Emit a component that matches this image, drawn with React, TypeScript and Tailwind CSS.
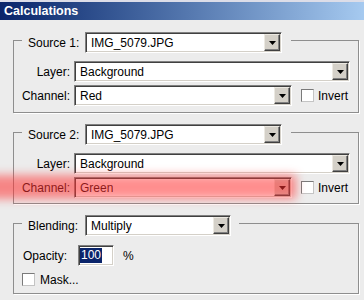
import React from 'react';

const Select = ({ value, className }: { value: string; className: string }) => (
  <div
    className={`${className} h-[21px] flex items-center justify-between bg-white border border-t-[#808080] border-l-[#808080] border-b-white border-r-white shadow-[inset_1px_1px_0_#404040,inset_-1px_-1px_0_#d4d0c8]`}
  >
    <span className="pl-[5px] truncate">{value}</span>
    <div className="w-[16px] h-[17px] mr-[1px] flex items-center justify-center bg-[#d4d0c8] border border-t-[#ece9e2] border-l-[#ece9e2] border-b-[#404040] border-r-[#404040] shadow-[inset_-1px_-1px_0_#808080]">
      <svg width="7" height="4" viewBox="0 0 7 4">
        <polygon points="0,0 7,0 3.5,4" fill="#000" />
      </svg>
    </div>
  </div>
);

const Check = ({ className }: { className: string }) => (
  <div className={`${className} w-[13px] h-[13px] bg-white border border-t-[#7a7a7a] border-l-[#7a7a7a] border-b-[#c4c4c4] border-r-[#c4c4c4]`} />
);

export default function App() {
  return (
    <div className="relative w-[364px] h-[300px] overflow-hidden bg-[#ececec] text-black text-[12px] leading-[14px] font-['Liberation_Sans',Arial,sans-serif]">
      <div className="h-[2px] bg-[#dcdde8]" />
      <div className="h-[18px] flex items-center pl-[4px] bg-linear-to-r from-[#0a246a] to-[#a6caf0] text-white font-bold text-[12.5px]">
        Calculations
      </div>

      <div className="pl-[13px] pt-[20px]">
        {/* source 1 */}
        <div className="w-[346px] border border-[#8e8e8e] shadow-[1px_1px_0_#fff] pb-[6px]">
          <div className="-mt-[9px] ml-[8px] w-fit flex items-center bg-[#ececec] pl-[6px] pr-[9px]">
            <span className="w-[57px]">Source 1:</span>
            <Select value="IMG_5079.JPG" className="w-[197px]" />
          </div>
          <div className="mt-[8px] flex items-center">
            <span className="w-[56px] text-right">Layer:</span>
            <Select value="Background" className="ml-[4px] w-[276px]" />
          </div>
          <div className="mt-[3px] flex items-center">
            <span className="w-[56px] text-right">Channel:</span>
            <Select value="Red" className="ml-[4px] w-[218px]" />
            <Check className="ml-[9px]" />
            <span className="ml-[4px]">Invert</span>
          </div>
        </div>

        {/* source 2 */}
        <div className="mt-[19px] w-[346px] border border-[#8e8e8e] shadow-[1px_1px_0_#fff] pb-[5px]">
          <div className="-mt-[9px] ml-[8px] w-fit flex items-center bg-[#ececec] pl-[6px] pr-[9px]">
            <span className="w-[57px]">Source 2:</span>
            <Select value="IMG_5079.JPG" className="w-[197px]" />
          </div>
          <div className="mt-[8px] flex items-center">
            <span className="w-[56px] text-right">Layer:</span>
            <Select value="Background" className="ml-[4px] w-[276px]" />
          </div>
          <div className="mt-[3px] flex items-center">
            <span className="w-[56px] text-right">Channel:</span>
            <Select value="Green" className="ml-[4px] w-[218px]" />
            <Check className="ml-[9px]" />
            <span className="ml-[4px]">Invert</span>
          </div>
        </div>

        {/* blending */}
        <div className="mt-[19px] w-[346px] border border-[#8e8e8e] shadow-[1px_1px_0_#fff] pb-[7px]">
          <div className="-mt-[9px] ml-[8px] w-fit flex items-center bg-[#ececec] pl-[6px] pr-[8px]">
            <span className="w-[57px]">Blending:</span>
            <Select value="Multiply" className="w-[146px]" />
          </div>
          <div className="mt-[9px] flex items-center pl-[9px]">
            <span className="w-[55px]">Opacity:</span>
            <div className="w-[36px] h-[21px] flex items-center bg-white border border-t-[#808080] border-l-[#808080] border-b-white border-r-white shadow-[inset_1px_1px_0_#404040,inset_-1px_-1px_0_#d4d0c8] pl-[1px]">
              <span className="bg-[#0a246a] text-white px-[1px] leading-[15px]">100</span>
            </div>
            <span className="ml-[9px]">%</span>
          </div>
          <div className="mt-[7px] h-[13px] flex items-center pl-[8px]">
            <Check className="" />
            <span className="ml-[5px]">Mask...</span>
          </div>
        </div>
      </div>

      {/* red highlight glow over the Channel row */}
      <div className="absolute left-[-20px] top-[175px] w-[316px] h-[24px] bg-[#ff3232]/55 blur-[5px] pointer-events-none" />
    </div>
  );
}
